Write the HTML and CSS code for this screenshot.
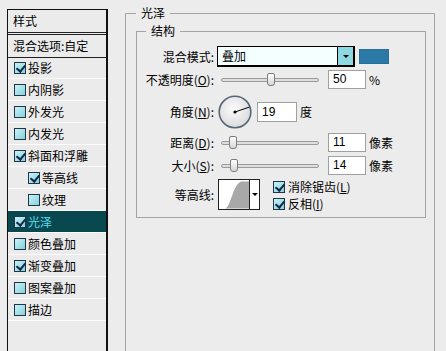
FILE: index.html
```html
<!DOCTYPE html>
<html lang="zh-CN">
<head>
<meta charset="utf-8">
<link rel="stylesheet" href="styles.css">
</head>
<body>
<div class="dialog">
  <aside class="style-list">
    <div class="list-head">样式</div>
    <div class="list-blend">混合选项:自定</div>
    <ul class="items">
      <li class="item first"><span class="cb on"></span>投影</li>
      <li class="item"><span class="cb"></span>内阴影</li>
      <li class="item"><span class="cb"></span>外发光</li>
      <li class="item"><span class="cb"></span>内发光</li>
      <li class="item"><span class="cb on"></span>斜面和浮雕</li>
      <li class="item sub"><span class="cb on"></span>等高线</li>
      <li class="item sub"><span class="cb"></span>纹理</li>
      <li class="item selected"><span class="cb on"></span>光泽</li>
      <li class="item"><span class="cb"></span>颜色叠加</li>
      <li class="item"><span class="cb on"></span>渐变叠加</li>
      <li class="item"><span class="cb"></span>图案叠加</li>
      <li class="item"><span class="cb"></span>描边</li>
    </ul>
  </aside>
  <section class="panel">
    <fieldset class="group outer">
      <legend>光泽</legend>
      <fieldset class="group inner">
        <legend>结构</legend>
        <div class="row row-blend">
          <span class="label">混合模式:</span>
          <div class="combo"><span class="combo-text">叠加</span><span class="combo-btn"><i class="tri"></i></span></div>
          <span class="swatch"></span>
        </div>
        <div class="row row-slider row-opacity">
          <span class="label">不透明度(<u>O</u>):</span>
          <div class="slider"><span class="thumb" style="left:45px"></span></div>
          <span class="num">50</span>
          <span class="unit">%</span>
        </div>
        <div class="row row-angle">
          <span class="label">角度(<u>N</u>):</span>
          <svg class="dial" viewBox="0 0 34 34" width="34" height="34">
            <defs>
              <radialGradient id="dg" cx="45%" cy="40%" r="60%">
                <stop offset="0" stop-color="#fcfcfc"/>
                <stop offset="1" stop-color="#dadada"/>
              </radialGradient>
            </defs>
            <circle cx="17" cy="17" r="15.8" fill="url(#dg)" stroke="#56657a" stroke-width="1.6"/>
            <line x1="17" y1="17" x2="31.3" y2="12.1" stroke="#000" stroke-width="1"/>
            <circle cx="17" cy="17" r="1.6" fill="#000"/>
          </svg>
          <span class="num num-angle">19</span>
          <span class="unit">度</span>
        </div>
        <div class="row row-slider row-gap">
          <span class="label">距离(<u>D</u>):</span>
          <div class="slider"><span class="thumb" style="left:7px"></span></div>
          <span class="num">11</span>
          <span class="unit">像素</span>
        </div>
        <div class="row row-slider row-gap">
          <span class="label">大小(<u>S</u>):</span>
          <div class="slider"><span class="thumb" style="left:8px"></span></div>
          <span class="num">14</span>
          <span class="unit">像素</span>
        </div>
        <div class="row row-contour">
          <span class="label">等高线:</span>
          <div class="contour">
            <svg class="contour-svg" viewBox="0 0 31 29" width="31" height="29">
              <path d="M6 29 C12 29 14 4 23 1 L31 1 L31 29 Z" fill="#a8a8a8"/>
            </svg>
            <span class="contour-btn"><i class="tri"></i></span>
          </div>
          <div class="checks">
            <label class="check"><span class="cb on"></span><span class="check-text">消除锯齿(<u>L</u>)</span></label>
            <label class="check"><span class="cb on"></span><span class="check-text">反相(<u>I</u>)</span></label>
          </div>
        </div>
      </fieldset>
    </fieldset>
  </section>
</div>
</body>
</html>
```
FILE: styles.css
```css
* { box-sizing: border-box; }
html, body { margin: 0; padding: 0; }
body {
  background: #ececec;
  font: 12px/14px "Noto Sans CJK SC", "Liberation Sans", sans-serif;
  color: #000;
  width: 446px;
  height: 351px;
  overflow: hidden;
}
.dialog { display: flex; align-items: flex-start; padding-left: 7px; }

/* left list */
.style-list {
  margin-top: 9px;
  width: 101px;
  height: 342px;
  flex: none;
  border: 1px solid #111;
  border-right-width: 2px;
  border-bottom: 0;
  background: #ebebeb;
}
.list-head {
  height: 25px;
  line-height: 22px;
  padding-left: 5px;
  border-bottom: 3px double #222;
}
.list-blend {
  height: 23px;
  line-height: 22px;
  padding-left: 5px;
  border-bottom: 1px solid #222;
}
.items { list-style: none; margin: 0; padding: 0; }
.item {
  display: flex;
  align-items: center;
  gap: 2px;
  height: 22px;
  padding-left: 6px;
  border-bottom: 1px solid #fbfbfb;
}
.item.first { height: 21px; }
.item.sub { padding-left: 20px; }
.item.selected { background: #0a4850; color: #58dcec; }

.cb {
  position: relative;
  flex: none;
  width: 12px;
  height: 12px;
  border: 1px solid #233447;
  background: linear-gradient(135deg, #c8f2f6, #84d2dc);
}
.cb.on::after {
  content: "";
  position: absolute;
  left: 3px;
  top: 0;
  width: 4px;
  height: 7px;
  border: solid #12294a;
  border-width: 0 2px 2px 0;
  transform: rotate(40deg);
}

/* right panel */
.panel { margin-left: 17px; margin-top: 6px; }
.group { margin: 0; padding: 0; border: 1px solid #a4a4a4; min-width: 0; }
.group > legend { padding: 0 5px; line-height: 14px; }
.outer { width: 310px; height: 345px; padding-left: 10px; border-bottom: 0; }
.inner { width: 290px; margin-top: 4px; padding: 0 0 7px 0; }
.inner > legend { margin-left: 9px; }

.row { display: flex; align-items: center; }
.label { width: 77px; flex: none; text-align: right; white-space: nowrap; }

.row-blend { margin-top: 8px; height: 21px; }
.combo {
  margin-left: 3px;
  width: 138px;
  height: 21px;
  display: flex;
  border: 1px solid #000;
  border-right-width: 2px;
  border-bottom-width: 2px;
  background: #f4ffff;
}
.combo-text { flex: 1; padding-left: 4px; line-height: 18px; }
.combo-btn {
  width: 16px;
  background: #8cd9e2;
  border-left: 1px solid #000;
  display: flex;
  align-items: center;
  justify-content: center;
}
.tri {
  width: 0;
  height: 0;
  border-left: 3px solid transparent;
  border-right: 3px solid transparent;
  border-top: 3px solid #000;
}
.swatch {
  margin-left: 4px;
  width: 30px;
  height: 15px;
  background: #2b79a6;
  border: 1px solid #2a6f99;
}

.row-slider { height: 19px; }
.row-opacity { margin-top: 3px; }
.row-gap { margin-top: 4px; }
.slider {
  position: relative;
  margin-left: 7px;
  width: 98px;
  height: 4px;
  border: 1px solid #9a9a9a;
  border-radius: 3px;
  background: #dedede;
}
.thumb {
  position: absolute;
  top: -6px;
  width: 8px;
  height: 13px;
  border: 1px solid #7d7d7d;
  border-radius: 2px 2px 3px 3px;
  background: linear-gradient(#ffffff, #d6d6d6);
}
.num {
  margin-left: 9px;
  width: 38px;
  height: 19px;
  border: 1px solid #a0a0a0;
  background: #fff;
  padding-left: 4px;
  font-family: "Liberation Sans", sans-serif;
  line-height: 17px;
}
.unit { margin-left: 3px; }

.row-angle { margin-top: 6px; height: 34px; }
.dial { margin-left: 4px; width: 34px; height: 34px; flex: none; }
.num-angle { margin-left: 5px; width: 40px; height: 20px; line-height: 18px; }

.row-contour { margin-top: 4px; height: 31px; align-items: flex-start; }
.row-contour .label { align-self: center; }
.contour {
  margin-left: 4px;
  display: flex;
  height: 31px;
  border: 1px solid #222;
  background: #fff;
}
.contour-svg { display: block; width: 31px; height: 29px; border-right: 1px solid #222; }
.contour-btn { width: 9px; display: flex; align-items: center; justify-content: center; }
.checks {
  margin-left: 13px;
  padding-top: 2px;
  display: flex;
  flex-direction: column;
  gap: 5px;
}
.check { display: flex; align-items: center; gap: 3px; height: 12px; line-height: 12px; white-space: nowrap; }
```
